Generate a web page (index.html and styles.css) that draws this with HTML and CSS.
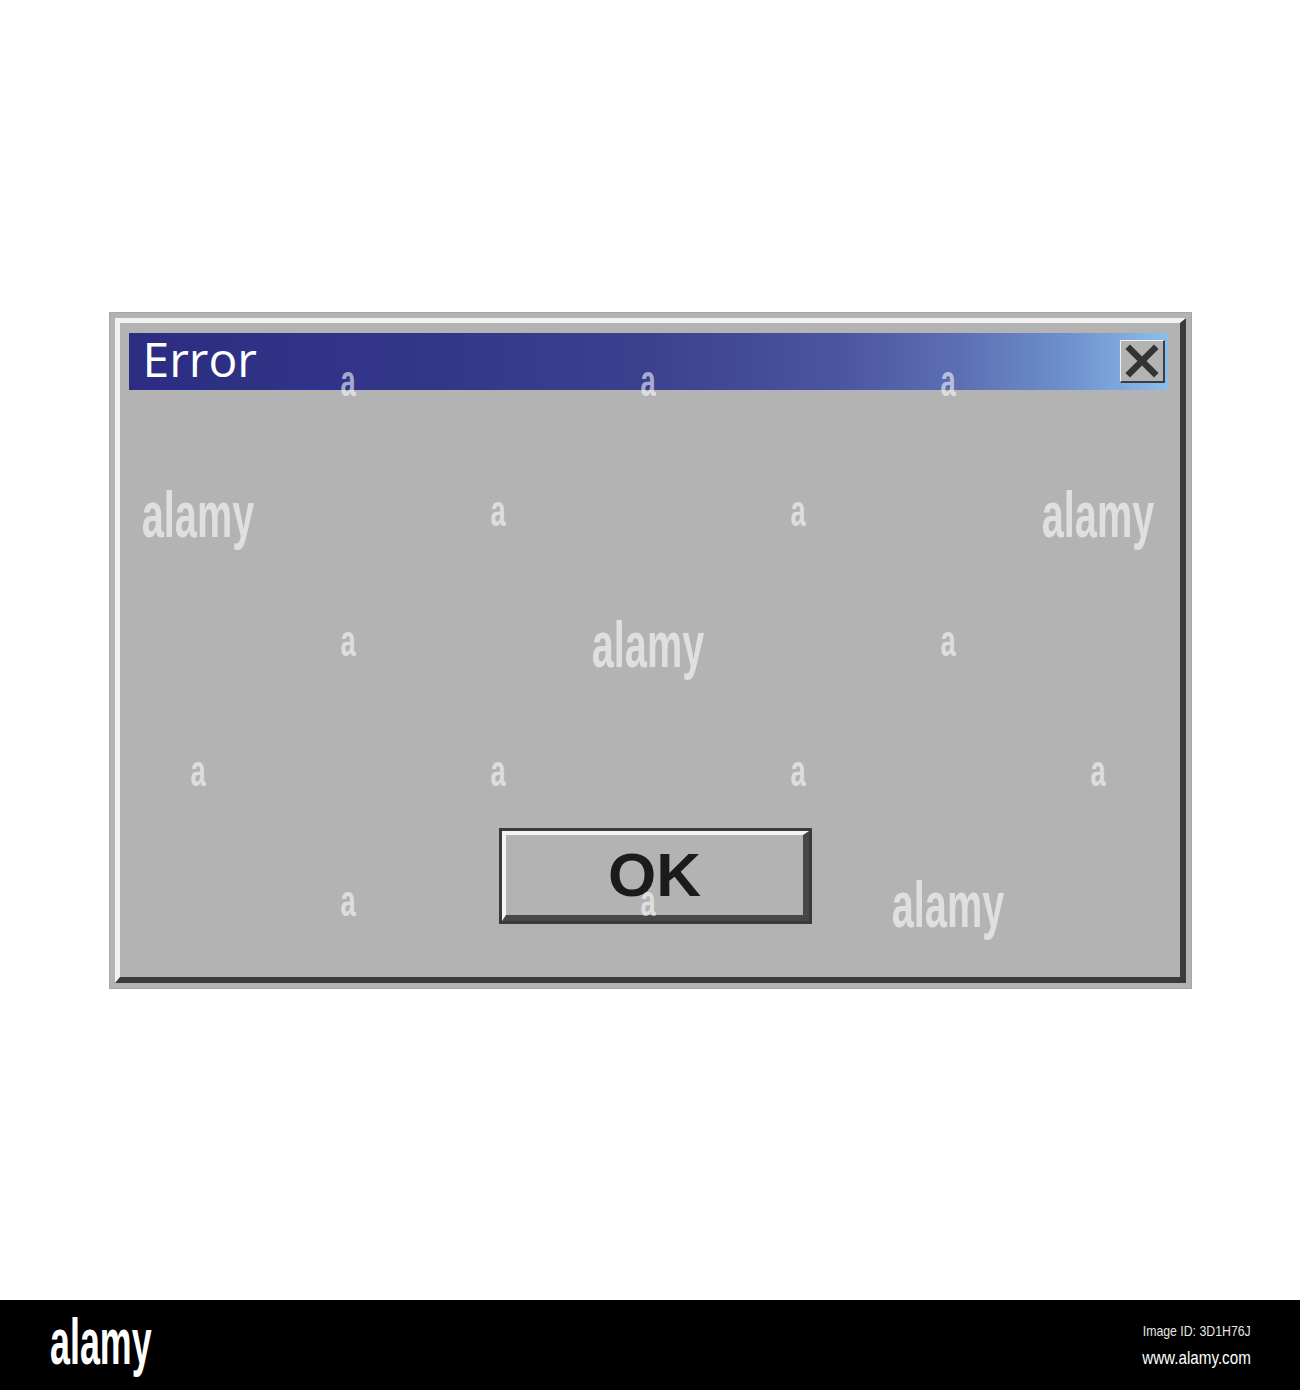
FILE: index.html
```html
<!DOCTYPE html>
<html lang="en">
<head>
    <meta charset="UTF-8">
    <meta name="viewport" content="width=device-width, initial-scale=1.0">
    <title>Error</title>
    <link rel="stylesheet" href="styles.css">
</head>
<body>
    <div class="stage">
        <!-- Classic error dialog -->
        <div class="window">
            <div class="frame">
                <div class="titlebar">
                    <span class="title">Error</span>
                    <button class="close" aria-label="Close">
                        <svg width="42" height="40" viewBox="0 0 42 40">
                            <path d="M9 8 L33 32 M33 8 L9 32" stroke="#333" stroke-width="6.5" stroke-linecap="square" fill="none"/>
                        </svg>
                    </button>
                </div>
                <div class="content">
                    <button class="ok">OK</button>
                </div>
            </div>
        </div>

        <!-- Watermark pattern laid over the picture -->
        <div class="watermarks">
            <span></span><span class="mark">a</span><span></span><span class="mark">a</span><span></span><span class="mark">a</span><span></span>
            <span class="mark word">alamy</span><span></span><span class="mark">a</span><span></span><span class="mark">a</span><span></span><span class="mark word">alamy</span>
            <span></span><span class="mark">a</span><span></span><span class="mark word">alamy</span><span></span><span class="mark">a</span><span></span>
            <span class="mark">a</span><span></span><span class="mark">a</span><span></span><span class="mark">a</span><span></span><span class="mark">a</span>
            <span></span><span class="mark">a</span><span></span><span class="mark">a</span><span></span><span class="mark word">alamy</span><span></span>
        </div>
    </div>

    <div class="credit">
        <span class="logo">alamy</span>
        <div class="credit-info">
            <span class="image-id">Image ID: 3D1H76J</span>
            <span class="site">www.alamy.com</span>
        </div>
    </div>
</body>
</html>
```

FILE: styles.css
```css
body {
    margin: 0;
    padding: 0;
    background: #ffffff;
    font-family: "Liberation Sans", Arial, sans-serif;
}

.stage {
    height: 1300px;
    display: flex;
    align-items: center;
    justify-content: center;
    position: relative;
}

/* Outer grey rim of the window */
.window {
    width: 1083px;
    height: 677px;
    box-sizing: border-box;
    background: #b3b3b3;
    border: 1px solid #a7a7a7;
    padding: 5px;
    display: flex;
}

/* Raised bevel: light top/left, dark bottom/right */
.frame {
    flex: 1;
    display: flex;
    flex-direction: column;
    border-style: solid;
    border-width: 5px 6px 6px 5px;
    border-color: #f2f2f2 #3b3b3b #3b3b3b #f2f2f2;
    padding: 10px 12px 0 9px;
}

.titlebar {
    height: 57px;
    display: flex;
    align-items: center;
    justify-content: space-between;
    padding: 0 3px 0 14px;
    background: linear-gradient(to right, #2c2d82 0%, #33378a 30%, #3b418f 50%, #4a55a0 68%, #5d6fb3 80%, #6d8fca 90%, #8cbdec 100%);
}

.title {
    color: #ffffff;
    font-family: "Open Sans", sans-serif;
    font-size: 48px;
    line-height: 1;
    margin-top: -5px;
}

.close {
    width: 45px;
    height: 43px;
    padding: 0;
    margin: 0;
    box-sizing: border-box;
    background: #b3b3b3;
    border-style: solid;
    border-width: 1px 2px 2px 1px;
    border-color: #f4f4f4 #3d3d3d #3d3d3d #f4f4f4;
    display: flex;
    align-items: center;
    justify-content: center;
}

.content {
    flex: 1;
    display: flex;
    align-items: flex-end;
    justify-content: center;
    padding-bottom: 56px;
}

/* Bevelled face inside a dark outline */
.ok {
    width: 307px;
    height: 90px;
    margin-left: 15px;
    box-sizing: border-box;
    background: #b3b3b3;
    border-style: solid;
    border-width: 4px 6px 6px 4px;
    border-color: #f4f4f4 #474747 #474747 #f4f4f4;
    outline: 3px solid #3a3a3a;
    font-family: "Liberation Sans", Arial, sans-serif;
    font-weight: bold;
    font-size: 62px;
    color: #1b1b1b;
    padding: 0;
    line-height: 1;
}

/* Semi transparent repeating marks over the picture */
.watermarks {
    position: absolute;
    left: 123px;
    top: 322px;
    display: grid;
    grid-template-columns: repeat(7, 150px);
    grid-template-rows: repeat(5, 130px);
    pointer-events: none;
}

.mark {
    display: flex;
    align-items: center;
    justify-content: center;
    color: rgba(255, 255, 255, 0.58);
    font-family: "Liberation Sans", Arial, sans-serif;
    font-weight: bold;
    font-size: 44px;
    line-height: 1;
    transform: scaleX(0.62);
    margin-top: -12px;
}

.mark.word {
    font-size: 64px;
    margin-top: -4px;
}

/* Black credit strip along the bottom */
.credit {
    height: 90px;
    background: #000000;
    color: #ffffff;
    display: flex;
    align-items: center;
    justify-content: space-between;
    padding: 0 49px 0 50px;
}

.logo {
    font-weight: bold;
    font-size: 64px;
    line-height: 1;
    display: inline-block;
    transform: scaleX(0.56);
    transform-origin: left center;
    margin-top: -6px;
}

.credit-info {
    display: flex;
    flex-direction: column;
    align-items: flex-end;
    gap: 8px;
}

.image-id {
    font-size: 15px;
    display: inline-block;
    transform: scaleX(0.82);
    transform-origin: right center;
    color: #e6e6e6;
}

.site {
    font-size: 19px;
    display: inline-block;
    transform: scaleX(0.8);
    transform-origin: right center;
}
```
